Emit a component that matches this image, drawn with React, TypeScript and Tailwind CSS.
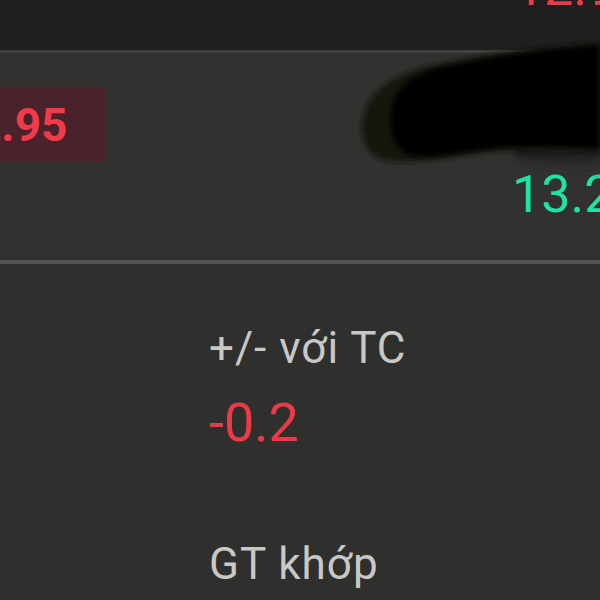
export default function App() {
  return (
    <div className="relative flex h-[600px] w-[600px] flex-col overflow-hidden bg-[#2f2f2d] font-['Roboto','Liberation_Sans',sans-serif]">
      {/* top row (cut off) */}
      <div className="flex h-[50px] shrink-0 overflow-hidden bg-[#1f1f1f]">
        <div className="ml-auto w-[85px] shrink-0">
          <p className="-mt-[38px] whitespace-nowrap text-[52px] leading-none text-[#f03a4c]">12.95</p>
        </div>
      </div>
      <div className="h-[3px] shrink-0 bg-[#40403f]" />

      {/* price row */}
      <div className="flex h-[207px] shrink-0 items-start bg-[#31312f]">
        <div className="-ml-[90px] mt-[34px] flex h-[75px] w-[196px] shrink-0 items-center justify-center rounded-lg bg-[#4a222a]">
          <span className="whitespace-nowrap text-[46px] font-bold leading-none text-[#f23a4b]">12.95</span>
        </div>
        <div className="ml-auto w-[88px] shrink-0 pt-[116px]">
          <p className="whitespace-nowrap text-[52px] leading-none text-[#1fe2a6]">13.25</p>
        </div>
      </div>
      <div className="h-[4px] shrink-0 bg-[#525250]" />

      {/* details */}
      <div className="flex flex-col pl-[209px] pt-[58px]">
        <p className="text-[44px] leading-[52px] tracking-[1px] text-[#c8c8c6]">+/- với TC</p>
        <p className="mt-[16px] text-[54px] leading-[65px] text-[#ee3a48]">-0.2</p>
        <p className="mt-[83px] text-[44px] leading-[52px] tracking-[1px] text-[#c8c8c6]">GT khớp</p>
      </div>

      {/* censor scribble over the name */}
      <svg className="pointer-events-none absolute inset-0" width="600" height="600" viewBox="0 0 600 600">
        <defs>
          <filter id="soft" x="-10%" y="-10%" width="120%" height="120%">
            <feGaussianBlur stdDeviation="2.5" />
          </filter>
          <linearGradient id="fade" x1="0" y1="148" x2="0" y2="176" gradientUnits="userSpaceOnUse">
            <stop offset="0" stopColor="#161615" />
            <stop offset="1" stopColor="#31312f" stopOpacity="0" />
          </linearGradient>
        </defs>
        <path d="M515 146 C550 148 575 150 600 148 L600 178 C575 174 545 168 515 160 Z" fill="url(#fade)" filter="url(#soft)" />
        <path
          d="M600 43 C545 47 480 54 430 66 C400 72 378 86 368 104 C358 122 360 148 378 158 C398 166 440 160 480 153 C520 148 565 150 600 152 Z"
          fill="#121211"
          filter="url(#soft)"
        />
        <path
          d="M600 45 C545 49 482 57 435 69 C410 76 396 90 392 106 C388 124 392 146 406 154 C424 160 452 154 485 149 C525 145 565 147 600 149 Z"
          fill="#030303"
          filter="url(#soft)"
        />
      </svg>
    </div>
  );
}
